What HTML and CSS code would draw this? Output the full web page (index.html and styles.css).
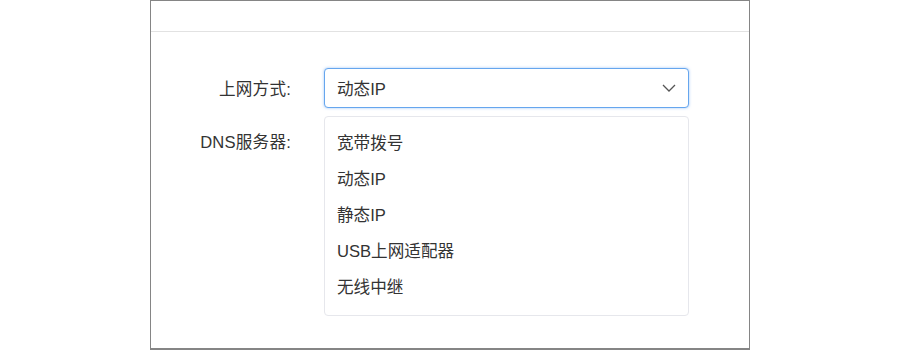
FILE: index.html
```html
<!DOCTYPE html>
<html>
<head>
<meta charset="utf-8">
<title>上网设置</title>
<link rel="stylesheet" href="styles.css">
</head>
<body>
<div class="panel">
  <div class="panel-head"></div>
  <form class="netform">
    <div class="row">
      <label class="row-label">上网方式:</label>
      <div class="row-field">
        <div class="select is-open">
          <span class="select-value">动态IP</span>
          <svg class="select-arrow" width="14" height="8" viewBox="0 0 14 8"><path d="M1 1l6 6 6-6" fill="none" stroke="#555" stroke-width="1.3"/></svg>
        </div>
        <ul class="dropdown">
          <li>宽带拨号</li>
          <li>动态IP</li>
          <li>静态IP</li>
          <li>USB上网适配器</li>
          <li>无线中继</li>
        </ul>
      </div>
    </div>
    <div class="row row-dns">
      <label class="row-label">DNS服务器:</label>
      <div class="row-field"></div>
    </div>
  </form>
</div>
</body>
</html>
```

FILE: styles.css
```css
body {margin: 0; background: #fff; font-family: "Liberation Sans", "Noto Sans CJK SC", sans-serif; font-size: 16.6px; color: #333;}

/* 外框 */
.panel {box-sizing: border-box; width: 600px; height: 350px; margin-left: 150px; border: 1px solid #858585; border-bottom-width: 2px; background: #fff;}
.panel-head {height: 30px; border-bottom: 1px solid #e2e2e2;}

/* 表单 */
.netform {padding-top: 36px;}
.row {display: flex; align-items: center; gap: 33px;}
.row-label {width: 140px; text-align: right; color: #333; letter-spacing: .2px;}
.row-field {position: relative; width: 365px;}
.row-dns {height: 34px; margin-top: 16px;}

.select {box-sizing: border-box; height: 40px; display: flex; align-items: center; justify-content: space-between; padding: 0 12px; border: 1px solid #d9d9d9; border-radius: 4px; background: #fff;}
.select.is-open {border-color: #66a6ee; box-shadow: 0 0 3px rgba(80, 150, 240, .55);}

.dropdown {position: absolute; left: 0; top: 48px; z-index: 2; box-sizing: border-box; width: 100%; margin: 0; padding: 9px 0; list-style: none; border: 1px solid #e6e7ec; border-radius: 4px; background: #fff;}
.dropdown li {height: 36px; line-height: 36px; padding: 0 12px; color: #333;}
```
